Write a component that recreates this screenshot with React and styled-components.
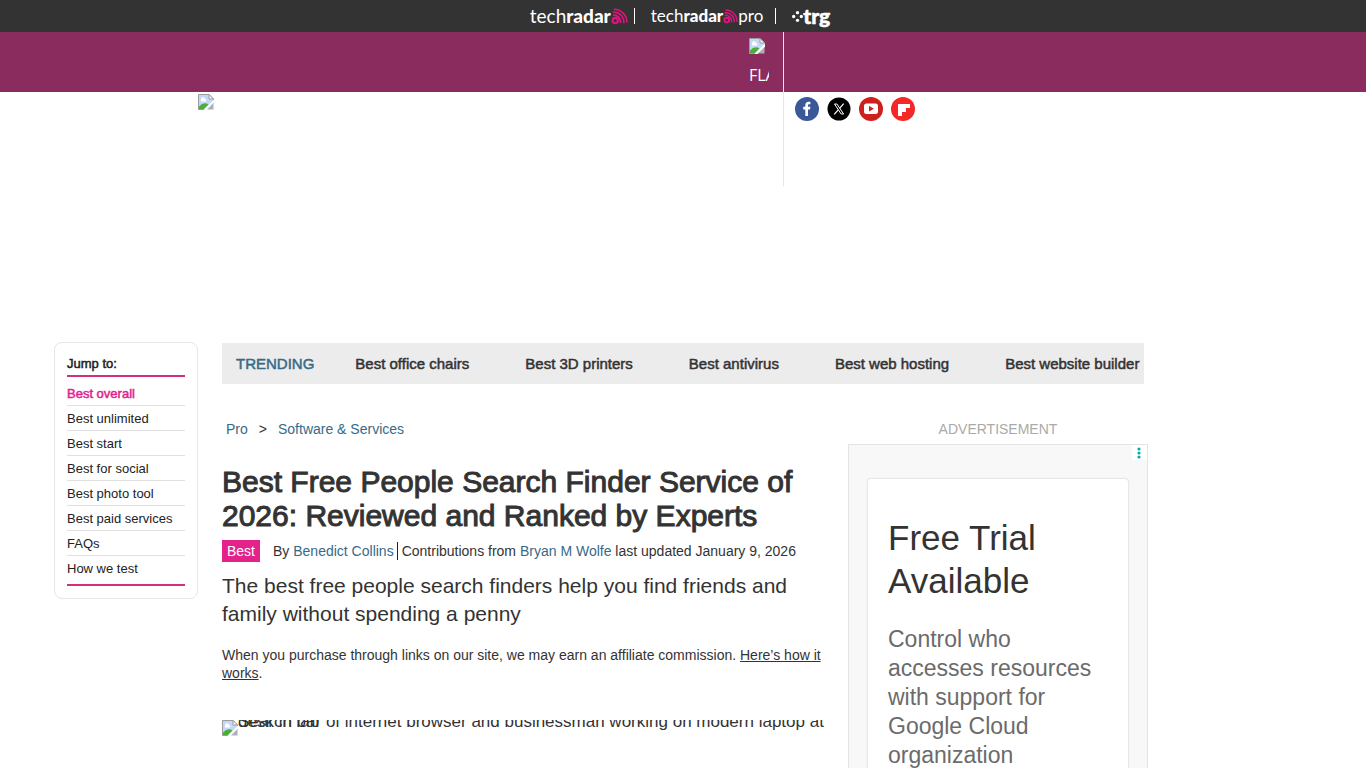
import { createGlobalStyle, styled } from "styled-components";

const jumpLinks = [
    "Best overall",
    "Best unlimited",
    "Best start",
    "Best for social",
    "Best photo tool",
    "Best paid services",
    "FAQs",
    "How we test",
];

const trending = [
    "Best office chairs",
    "Best 3D printers",
    "Best antivirus",
    "Best web hosting",
    "Best website builder",
];

function Waves({ size }) {
    return (
        <svg width={size} height={size} viewBox="0 0 18 18" fill="none" stroke="#e0127f" aria-hidden="true">
            <circle cx="4.5" cy="13.3" r="2.8" strokeWidth="2.4" />
            <path d="M2 7.6c5-.6 8.600 3.200 8.200 8.400" strokeWidth="2" />
            <path d="M2 4.400c7-.6 11.800 4.800 11.600 11.600" strokeWidth="1.800" />
            <path d="M3 1.200c8 0 14 6.500 13.800 14.300" strokeWidth="1.6" />
        </svg>
    );
}

function BrokenImage() {
    return (
        <svg width="16" height="16" viewBox="0 0 16 16" aria-hidden="true">
            <path d="M.5.5h10.5l4.5 4.5v4L8 15.5H.5z" fill="#c3d9f7" stroke="#9b9b9b" />
            <path d="M11 .5V5h4.5z" fill="#fff" stroke="#9b9b9b" />
            <path d="M3 5.5a2 2 0 0 1 4-.5 1.5 1.5 0 0 1 1 2.5H3z" fill="#fff" />
            <path d="M1 15v-2.5Q6 7 10.5 10.5L6 15z" fill="#4caf35" />
            <path d="M15.5 8.5v7H9z" fill="#a9b0ba" />
            <path d="M16 5.5L5.5 16h3L16 8.5z" fill="#fff" />
        </svg>
    );
}

function Socials() {
    return (
        <SocialList>
            <a href="#facebook" aria-label="Facebook">
                <svg width="24" height="24" viewBox="0 0 24 24">
                    <circle cx="12" cy="12" r="12" fill="#3b5998" />
                    <path d="M10.3 19v-6.5H8.2V9.800h2.100V8.200c0-2.200 1.300-3.400 3.300-3.400.9 0 1.600.1 1.800.1v2.400h-1.200c-1 0-1.200.5-1.200 1.200v1.300h2.400l-.4 2.700h-2V19z" fill="#fff" />
                </svg>
            </a>
            <a href="#x" aria-label="X">
                <svg width="24" height="24" viewBox="0 0 24 24">
                    <circle cx="12" cy="12" r="11.5" fill="#000" />
                    <path d="M7.5 7h2.400l6.700 10h-2.400z" fill="none" stroke="#fff" />
                    <path d="M16.7 6.7l-4.100 4.600M11.2 12.800l-4 4.500" stroke="#fff" strokeWidth="1.2" />
                </svg>
            </a>
            <a href="#youtube" aria-label="YouTube">
                <svg width="24" height="24" viewBox="0 0 24 24">
                    <circle cx="12" cy="12" r="12" fill="#cd201f" />
                    <rect x="5" y="6.5" width="14" height="10.5" rx="2.5" fill="#fff" />
                    <path d="M10 9l5 2.800-5 2.800z" fill="#cd201f" />
                </svg>
            </a>
            <a href="#flipboard" aria-label="Flipboard">
                <svg width="24" height="24" viewBox="0 0 24 24">
                    <circle cx="12" cy="12" r="12" fill="#f52828" />
                    <path d="M7 7h12v4h-4v4h-4v4H7z" fill="#fff" />
                </svg>
            </a>
        </SocialList>
    );
}

export default function App() {
    return (
        <>
            <GlobalStyle />
            <BrandBar>
                <Brand href="#techradar">
                    tech<b>radar</b><Waves size={17} />
                </Brand>
                <Brand href="#pro" $small>
                    tech<b>radar</b><Waves size={15} />pro
                </Brand>
                <Brand href="#trg">
                    <svg width="11" height="11" viewBox="0 0 10 10" fill="#fff" aria-hidden="true">
                        <circle cx="5" cy="1.5" r="1.5" />
                        <circle cx="1.5" cy="5" r="1.5" />
                        <circle cx="8.5" cy="5" r="1.5" />
                        <circle cx="5" cy="8.5" r="1.5" />
                    </svg>
                    trg
                </Brand>
            </BrandBar>
            <Masthead>
                <Flagship>
                    <BrokenImage />
                    <span>FLAGSHIP</span>
                </Flagship>
            </Masthead>
            <SubHeader>
                <Logo><BrokenImage /></Logo>
                <Socials />
            </SubHeader>
            <Page>
                <Jump aria-label="Jump to">
                    <JumpTitle>Jump to:</JumpTitle>
                    <JumpList>
                        {jumpLinks.map((link, i) => (
                            <JumpItem key={link} $active={i === 0}>
                                <a href="#section">{link}</a>
                            </JumpItem>
                        ))}
                    </JumpList>
                </Jump>
                <Content>
                    <Trending>
                        <strong>TRENDING</strong>
                        {trending.map((item) => (
                            <a key={item} href="#trending">{item}</a>
                        ))}
                    </Trending>
                    <Columns>
                        <Article>
                            <Crumbs>
                                <Link href="#pro">Pro</Link>
                                <span>&gt;</span>
                                <Link href="#software">Software &amp; Services</Link>
                            </Crumbs>
                            <Title>Best Free People Search Finder Service of 2026: Reviewed and Ranked by Experts</Title>
                            <Byline>
                                <Tag>Best</Tag>
                                <Author>By <Link href="#author">Benedict Collins</Link></Author>
                                <span>
                                    Contributions from <Link href="#author">Bryan M Wolfe</Link> last updated January 9, 2026
                                </span>
                            </Byline>
                            <Strapline>The best free people search finders help you find friends and family without spending a penny</Strapline>
                            <Affiliate>
                                When you purchase through links on our site, we may earn an affiliate commission. <a href="#how">Here’s how it works</a>.
                            </Affiliate>
                            <Hero>
                                <BrokenImage />
                                <HeroAlt>
                                    <span>Search bar of internet browser and businessman working on modern laptop at</span>
                                    <span>desk in lab</span>
                                </HeroAlt>
                            </Hero>
                        </Article>
                        <Aside>
                            <AdLabel>ADVERTISEMENT</AdLabel>
                            <Ad>
                                <AdMenu aria-label="Ad choices">
                                    <svg width="4" height="12" viewBox="0 0 4 12" fill="#00aeaf">
                                        <circle cx="2" cy="2" r="1.6" />
                                        <circle cx="2" cy="6" r="1.6" />
                                        <circle cx="2" cy="10" r="1.6" />
                                    </svg>
                                </AdMenu>
                                <AdCard>
                                    <h2>Free Trial Available</h2>
                                    <p>Control who accesses resources with support for Google Cloud organization</p>
                                </AdCard>
                            </Ad>
                        </Aside>
                    </Columns>
                </Content>
            </Page>
        </>
    );
}

const GlobalStyle = createGlobalStyle`
    * {
        box-sizing: border-box;
    }

    body {
        margin: 0;
        background: #fff;
        color: #333;
        font-family: "Liberation Sans", Arial, sans-serif;
        font-size: 14px;
    }

    #root {
        height: 100vh;
        overflow: hidden;
    }

    a {
        color: inherit;
        text-decoration: none;
    }

    svg {
        display: block;
        flex: none;
    }
`
const BrandBar = styled.nav`
    height: 32px;
    display: flex;
    align-items: center;
    justify-content: center;
    background: #333;
    padding-right: 6px;
`
const Brand = styled.a`
    display: flex;
    align-items: center;
    height: 16px;
    padding: 0 ${props => props.$small ? "12px" : "6px"} 0 ${props => props.$small ? "16px" : "0"};
    border-right: 1px solid #fff;
    color: #fff;
    font-family: Lato, sans-serif;
    font-size: ${props => props.$small ? "17px" : "19px"};
    line-height: 14px;

    b {
        font-weight: 900;
    }

    &:last-child {
        padding: 0 0 0 16px;
        border: 0;
        font-size: 21px;
        font-weight: 900;
        -webkit-text-stroke: 0.5px currentColor;
    }
`
const Masthead = styled.header`
    height: 60px;
    display: flex;
    background: #8b2c5e;
    color: #fff;
`
const Flagship = styled.div`
    width: 784px;
    padding: 6px 14px 0 0;
    display: flex;
    flex-direction: column;
    align-items: flex-end;
    border-right: 1px solid #e6e6e6;

    svg {
        margin-right: 4px;
    }

    span {
        width: 20px;
        margin-top: 11px;
        font-size: 16px;
        line-height: 20px;
        font-family: "Open Sans", sans-serif;
        overflow: hidden;
    }
`
const SubHeader = styled.div`
    height: 250px;
    display: flex;
    align-items: flex-start;
`
const Logo = styled.div`
    width: 784px;
    height: 94px;
    padding: 2px 0 0 198px;
    border-right: 1px solid #e6e6e6;
`
const SocialList = styled.div`
    display: flex;
    gap: 8px;
    padding: 5px 11px;
`
const Page = styled.main`
    display: flex;
    align-items: flex-start;
    gap: 24px;
    max-width: 1148px;
    padding-left: 54px;
`
const Jump = styled.nav`
    width: 144px;
    flex: none;
    padding: 12px;
    border: 1px solid #e6e6e6;
    border-radius: 8px;
    font-size: 13px;
    color: #222;
`
const JumpTitle = styled.div`
    padding: 1px 0 4px;
    line-height: 15px;
    -webkit-text-stroke: 0.5px currentColor;
`
const JumpList = styled.ul`
    margin: 0;
    padding: 4px 0 3px;
    list-style: none;
    border-top: 2px solid #d12f80;
    border-bottom: 2px solid #d12f80;
`
const JumpItem = styled.li`
    height: 25px;
    line-height: 26px;
    border-bottom: 1px solid #e0e0e0;
    color: ${props => props.$active ? "#e3228b" : "#222"};
    -webkit-text-stroke: ${props => props.$active ? "0.5px currentColor" : "0"};

    &:last-child {
        border-bottom: 0;
    }
`
const Content = styled.div`
    flex: 1;
    min-width: 0;
`
const Trending = styled.nav`
    height: 41px;
    margin: 1px 4px 0 0;
    padding: 0 0 0 14px;
    display: flex;
    align-items: center;
    gap: 56px;
    background: #ececec;
    font-size: 15px;
    white-space: nowrap;
    -webkit-text-stroke: 0.5px currentColor;

    strong {
        font-weight: normal;
        color: #366b88;
        margin-right: -15px;
    }
`
const Columns = styled.div`
    display: flex;
    gap: 26px;
    padding-top: 36px;
`
const Article = styled.article`
    flex: 1;
    min-width: 0;
`
const Link = styled.a`
    color: #366b88;
`
const Crumbs = styled.div`
    display: flex;
    gap: 11px;
    padding: 0 4px;
    line-height: 18px;
`
const Title = styled.h1`
    margin: 27px 0 7px;
    font-size: 30px;
    line-height: 34px;
    font-weight: normal;
    -webkit-text-stroke: 1px currentColor;
`
const Byline = styled.div`
    display: flex;
    align-items: center;
    height: 22px;
    white-space: nowrap;
`
const Tag = styled.span`
    padding: 0 5px;
    margin-right: 13px;
    line-height: 22px;
    background: #e3228b;
    color: #fff;
`
const Author = styled.span`
    padding-right: 3px;
    margin-right: 4px;
    line-height: 18px;
    border-right: 1px solid #222;
`
const Strapline = styled.p`
    margin: 10px 0 0;
    font-size: 21px;
    line-height: 28px;
`
const Affiliate = styled.p`
    margin: 18px 0 0;
    line-height: 18px;

    a {
        text-decoration: underline;
    }
`
const Hero = styled.div`
    height: 48px;
    margin-top: 38px;
    display: flex;
`
/* alt text collapses onto a single clipped line */
const HeroAlt = styled.div`
    display: grid;
    height: 12px;
    overflow-x: visible;
    overflow-y: clip;
    font-size: 17px;
    line-height: 4px;
    white-space: nowrap;

    span {
        grid-area: 1 / 1;
    }
`
const Aside = styled.aside`
    width: 300px;
    flex: none;
`
const AdLabel = styled.div`
    line-height: 18px;
    margin-bottom: 6px;
    text-align: center;
    color: #aaa;
`
const Ad = styled.section`
    position: relative;
    height: 600px;
    padding: 34px 19px;
    border: 1px solid #e4e4e4;
    background: #f8f8f8;
`
const AdMenu = styled.button`
    position: absolute;
    top: 0;
    right: 0;
    width: 15px;
    height: 15px;
    padding: 2px 5px;
    border: 0;
    background: #fff;
`
const AdCard = styled.div`
    height: 540px;
    padding: 37px 20px;
    background: #fff;
    border-radius: 3px;
    box-shadow: 0 0 2px rgba(0, 0, 0, 0.25);

    h2 {
        margin: 0 0 23px;
        font-size: 35px;
        line-height: 43px;
        font-weight: normal;
    }

    p {
        margin: 0;
        color: #6b6b6b;
        font-size: 23px;
        line-height: 29px;
    }
`
